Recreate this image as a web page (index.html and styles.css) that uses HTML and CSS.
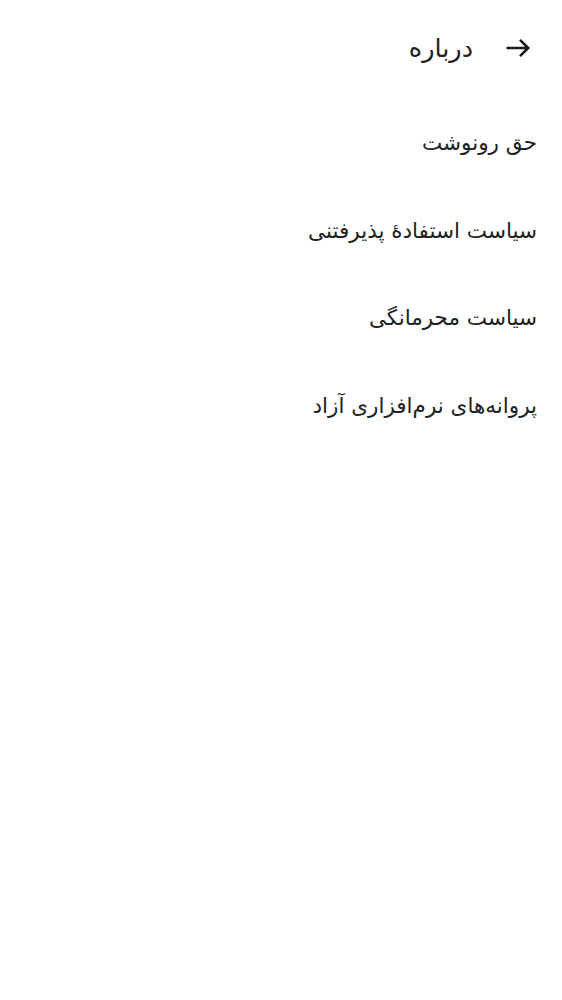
FILE: index.html
```html
<!DOCTYPE html>
<html lang="fa" dir="rtl">
<head>
<meta charset="utf-8">
<link rel="stylesheet" href="styles.css">
</head>
<body>
<header class="topbar">
  <button class="back" aria-label="بازگشت">
    <svg width="26" height="26" viewBox="0 0 26 26"><path d="M1.5 13h22M15 4.8l8.2 8.2-8.2 8.2" fill="none" stroke="#1a1a1a" stroke-width="2.6" stroke-linejoin="miter"/></svg>
  </button>
  <h1 class="title">درباره</h1>
</header>
<ul class="menu">
  <li class="item">حق رونوشت</li>
  <li class="item">سیاست استفادهٔ پذیرفتنی</li>
  <li class="item">سیاست محرمانگی</li>
  <li class="item">پروانه‌های نرم‌افزاری آزاد</li>
</ul>
</body>
</html>
```
FILE: styles.css
```css
html, body {
  margin: 0;
  padding: 0;
  background: #fff;
}
body {
  font-family: "DejaVu Sans", sans-serif;
  color: #222;
}
.topbar {
  display: flex;
  align-items: center;
  gap: 32px;
  height: 96px;
  padding: 0 31px 0 0;
  margin-bottom: 3px;
}
.back {
  border: 0;
  background: none;
  padding: 0;
  display: flex;
  align-items: center;
}
.title {
  margin: 0;
  font-size: 25.5px;
  font-weight: normal;
}
.menu {
  list-style: none;
  margin: 0;
  padding: 0 25px 0 0;
}
.item {
  height: 87.5px;
  display: flex;
  align-items: center;
  font-size: 21.5px;
}
```
